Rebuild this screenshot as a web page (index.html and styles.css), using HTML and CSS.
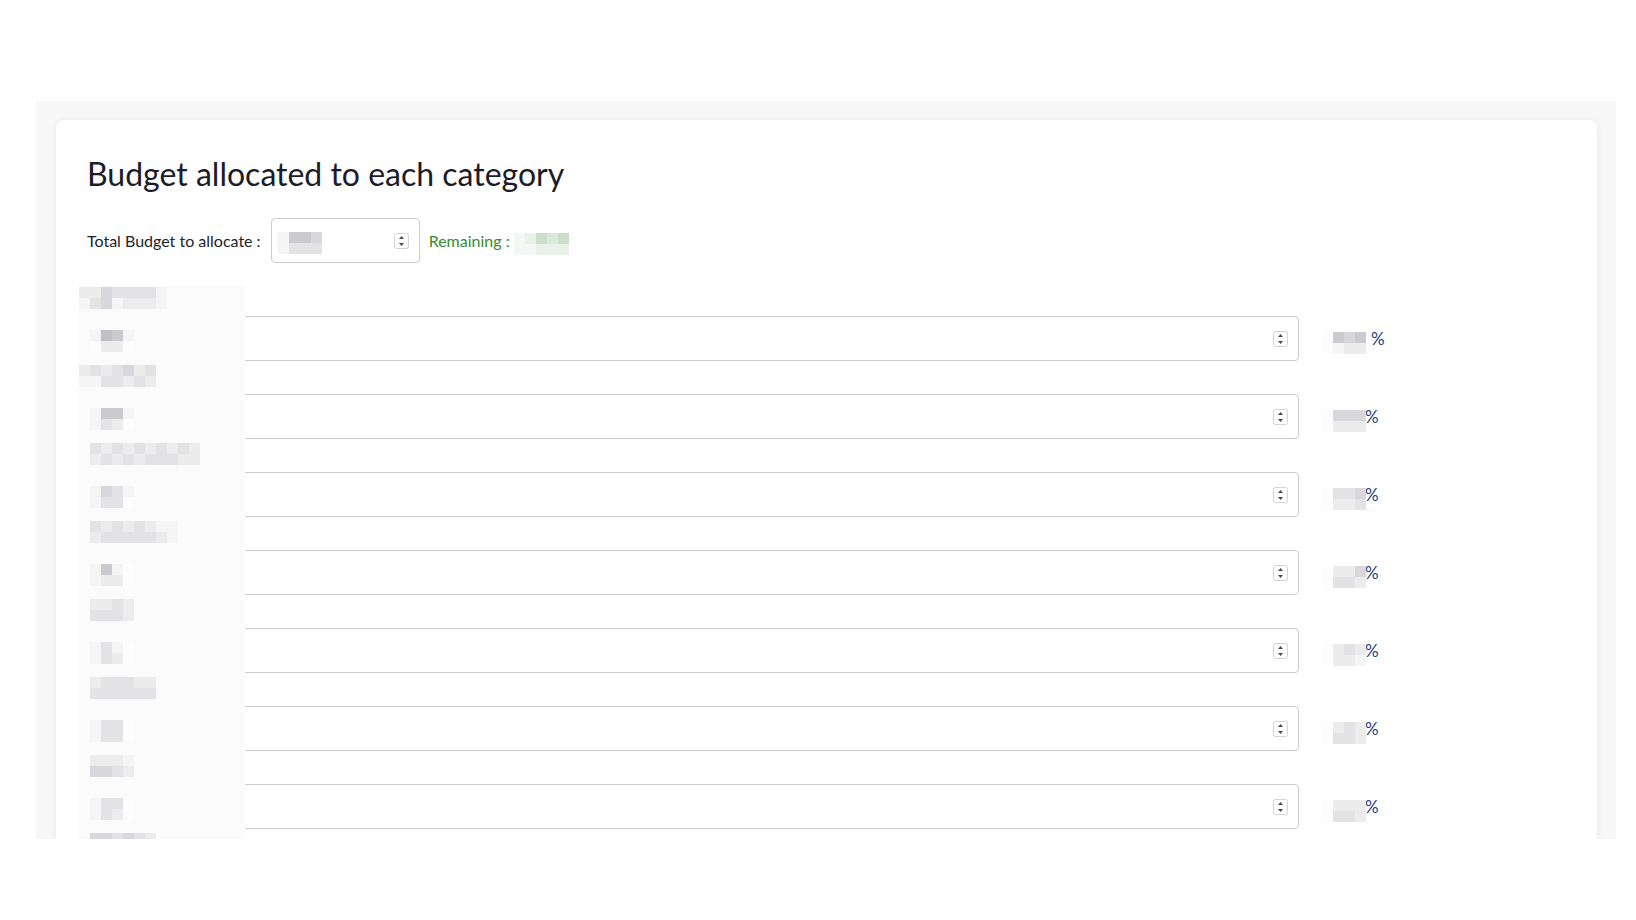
FILE: index.html
```html
<!DOCTYPE html>
<html>
	<head>
		<meta charset="UTF-8">
		<title>Budget allocated to each category</title>
		<link rel="stylesheet" href="styles.css">
	</head>
	<body>
		<div class="frame">
			<div class="card">
				<h1 class="title">Budget allocated to each category</h1>

				<div class="total">
					<span class="total-label">Total Budget to allocate :</span>
					<div class="num-box total-box">
						<span class="mosaic val"><i class="a"></i><i class="a"></i><i class="e"></i><i class="c"></i><i class="e"></i><i class="c"></i><i class="d"></i><i class="c"></i></span>
						<svg class="spin" width="15" height="16" viewBox="0 0 15 16"><rect x="0.5" y="0.5" width="14" height="15" rx="2" fill="#fff" stroke="#d4d4d4"/><path d="M5 6h5l-2.5-3z" fill="#4a4a4a"/><path d="M5 10h5l-2.5 3z" fill="#4a4a4a"/></svg>
					</div>
					<span class="remaining">Remaining :</span>
					<span class="mosaic green"><i class="ga"></i><i class="ga"></i><i class="gb"></i><i class="ga"></i><i class="gd"></i><i class="gb"></i><i class="gc"></i><i class="gb"></i><i class="gd"></i><i class="gb"></i></span>
				</div>

				<div class="fields">
					<!-- catégorie 1 -->
					<div class="field">
						<div class="field-label"><span class="mosaic"><i class="b"></i><i class="a"></i><i class="b"></i><i class="c"></i><i class="d"></i><i class="d"></i><i class="c"></i><i class="a"></i><i class="c"></i><i class="b"></i><i class="c"></i><i class="b"></i><i class="c"></i><i class="b"></i><i class="a"></i><i class="a"></i></span></div>
						<div class="field-line">
							<div class="num-box wide">
								<span class="mosaic val"><i class="a"></i><i class="w"></i><i class="f"></i><i class="b"></i><i class="e"></i><i class="b"></i><i class="a"></i><i class="w"></i></span>
								<svg class="spin" width="15" height="16" viewBox="0 0 15 16"><rect x="0.5" y="0.5" width="14" height="15" rx="2" fill="#fff" stroke="#d4d4d4"/><path d="M5 6h5l-2.5-3z" fill="#4a4a4a"/><path d="M5 10h5l-2.5 3z" fill="#4a4a4a"/></svg>
							</div>
							<div class="pct">
								<span class="mosaic"><i class="w"></i><i class="w"></i><i class="e"></i><i class="a"></i><i class="d"></i><i class="b"></i><i class="e"></i><i class="b"></i></span>
								<span class="pct-sign wide-gap">%</span>
							</div>
						</div>
					</div>
					<!-- catégorie 2 -->
					<div class="field">
						<div class="field-label"><span class="mosaic"><i class="b"></i><i class="a"></i><i class="c"></i><i class="a"></i><i class="b"></i><i class="c"></i><i class="c"></i><i class="c"></i><i class="d"></i><i class="b"></i><i class="b"></i><i class="c"></i><i class="c"></i><i class="b"></i></span></div>
						<div class="field-line">
							<div class="num-box wide">
								<span class="mosaic val"><i class="a"></i><i class="a"></i><i class="e"></i><i class="c"></i><i class="e"></i><i class="b"></i><i class="a"></i><i class="w"></i></span>
								<svg class="spin" width="15" height="16" viewBox="0 0 15 16"><rect x="0.5" y="0.5" width="14" height="15" rx="2" fill="#fff" stroke="#d4d4d4"/><path d="M5 6h5l-2.5-3z" fill="#4a4a4a"/><path d="M5 10h5l-2.5 3z" fill="#4a4a4a"/></svg>
							</div>
							<div class="pct">
								<span class="mosaic"><i class="w"></i><i class="w"></i><i class="d"></i><i class="b"></i><i class="d"></i><i class="b"></i><i class="d"></i><i class="b"></i></span>
								<span class="pct-sign">%</span>
							</div>
						</div>
					</div>
					<!-- catégorie 3 -->
					<div class="field">
						<div class="field-label"><span class="mosaic"><i class="v"></i><i class="v"></i><i class="c"></i><i class="b"></i><i class="b"></i><i class="c"></i><i class="c"></i><i class="b"></i><i class="b"></i><i class="c"></i><i class="c"></i><i class="b"></i><i class="b"></i><i class="c"></i><i class="c"></i><i class="c"></i><i class="b"></i><i class="c"></i><i class="c"></i><i class="b"></i><i class="b"></i><i class="b"></i></span></div>
						<div class="field-line">
							<div class="num-box wide">
								<span class="mosaic val"><i class="a"></i><i class="a"></i><i class="d"></i><i class="c"></i><i class="c"></i><i class="c"></i><i class="a"></i><i class="w"></i></span>
								<svg class="spin" width="15" height="16" viewBox="0 0 15 16"><rect x="0.5" y="0.5" width="14" height="15" rx="2" fill="#fff" stroke="#d4d4d4"/><path d="M5 6h5l-2.5-3z" fill="#4a4a4a"/><path d="M5 10h5l-2.5 3z" fill="#4a4a4a"/></svg>
							</div>
							<div class="pct">
								<span class="mosaic"><i class="w"></i><i class="w"></i><i class="c"></i><i class="b"></i><i class="c"></i><i class="b"></i><i class="d"></i><i class="c"></i></span>
								<span class="pct-sign">%</span>
							</div>
						</div>
					</div>
					<!-- catégorie 4 -->
					<div class="field">
						<div class="field-label"><span class="mosaic"><i class="v"></i><i class="v"></i><i class="c"></i><i class="b"></i><i class="b"></i><i class="c"></i><i class="c"></i><i class="c"></i><i class="b"></i><i class="c"></i><i class="c"></i><i class="c"></i><i class="b"></i><i class="c"></i><i class="a"></i><i class="b"></i><i class="a"></i><i class="a"></i></span></div>
						<div class="field-line">
							<div class="num-box wide">
								<span class="mosaic val"><i class="a"></i><i class="a"></i><i class="e"></i><i class="b"></i><i class="a"></i><i class="b"></i><i class="w"></i><i class="w"></i></span>
								<svg class="spin" width="15" height="16" viewBox="0 0 15 16"><rect x="0.5" y="0.5" width="14" height="15" rx="2" fill="#fff" stroke="#d4d4d4"/><path d="M5 6h5l-2.5-3z" fill="#4a4a4a"/><path d="M5 10h5l-2.5 3z" fill="#4a4a4a"/></svg>
							</div>
							<div class="pct">
								<span class="mosaic"><i class="w"></i><i class="w"></i><i class="b"></i><i class="c"></i><i class="b"></i><i class="c"></i><i class="d"></i><i class="b"></i></span>
								<span class="pct-sign">%</span>
							</div>
						</div>
					</div>
					<!-- catégorie 5 -->
					<div class="field">
						<div class="field-label"><span class="mosaic"><i class="v"></i><i class="v"></i><i class="b"></i><i class="c"></i><i class="b"></i><i class="c"></i><i class="c"></i><i class="c"></i><i class="b"></i><i class="b"></i></span></div>
						<div class="field-line">
							<div class="num-box wide">
								<span class="mosaic val"><i class="a"></i><i class="a"></i><i class="c"></i><i class="c"></i><i class="a"></i><i class="b"></i><i class="w"></i><i class="w"></i></span>
								<svg class="spin" width="15" height="16" viewBox="0 0 15 16"><rect x="0.5" y="0.5" width="14" height="15" rx="2" fill="#fff" stroke="#d4d4d4"/><path d="M5 6h5l-2.5-3z" fill="#4a4a4a"/><path d="M5 10h5l-2.5 3z" fill="#4a4a4a"/></svg>
							</div>
							<div class="pct">
								<span class="mosaic"><i class="w"></i><i class="w"></i><i class="b"></i><i class="b"></i><i class="c"></i><i class="b"></i><i class="b"></i><i class="a"></i></span>
								<span class="pct-sign">%</span>
							</div>
						</div>
					</div>
					<!-- catégorie 6 -->
					<div class="field">
						<div class="field-label"><span class="mosaic"><i class="v"></i><i class="v"></i><i class="b"></i><i class="c"></i><i class="c"></i><i class="c"></i><i class="c"></i><i class="c"></i><i class="c"></i><i class="c"></i><i class="b"></i><i class="c"></i><i class="b"></i><i class="c"></i></span></div>
						<div class="field-line">
							<div class="num-box wide">
								<span class="mosaic val"><i class="a"></i><i class="a"></i><i class="c"></i><i class="c"></i><i class="c"></i><i class="c"></i><i class="w"></i><i class="w"></i></span>
								<svg class="spin" width="15" height="16" viewBox="0 0 15 16"><rect x="0.5" y="0.5" width="14" height="15" rx="2" fill="#fff" stroke="#d4d4d4"/><path d="M5 6h5l-2.5-3z" fill="#4a4a4a"/><path d="M5 10h5l-2.5 3z" fill="#4a4a4a"/></svg>
							</div>
							<div class="pct">
								<span class="mosaic"><i class="w"></i><i class="w"></i><i class="b"></i><i class="c"></i><i class="c"></i><i class="c"></i><i class="b"></i><i class="b"></i></span>
								<span class="pct-sign">%</span>
							</div>
						</div>
					</div>
					<!-- catégorie 7 -->
					<div class="field">
						<div class="field-label"><span class="mosaic"><i class="v"></i><i class="v"></i><i class="b"></i><i class="d"></i><i class="b"></i><i class="d"></i><i class="b"></i><i class="c"></i><i class="a"></i><i class="b"></i></span></div>
						<div class="field-line">
							<div class="num-box wide">
								<span class="mosaic val"><i class="a"></i><i class="a"></i><i class="c"></i><i class="c"></i><i class="c"></i><i class="b"></i><i class="w"></i><i class="w"></i></span>
								<svg class="spin" width="15" height="16" viewBox="0 0 15 16"><rect x="0.5" y="0.5" width="14" height="15" rx="2" fill="#fff" stroke="#d4d4d4"/><path d="M5 6h5l-2.5-3z" fill="#4a4a4a"/><path d="M5 10h5l-2.5 3z" fill="#4a4a4a"/></svg>
							</div>
							<div class="pct">
								<span class="mosaic"><i class="w"></i><i class="w"></i><i class="b"></i><i class="c"></i><i class="b"></i><i class="c"></i><i class="b"></i><i class="b"></i></span>
								<span class="pct-sign">%</span>
							</div>
						</div>
					</div>
					<!-- catégorie 8 : coupée par le cadre -->
					<div class="field">
						<div class="field-label"><span class="mosaic"><i class="v"></i><i class="v"></i><i class="d"></i><i class="b"></i><i class="d"></i><i class="b"></i><i class="c"></i><i class="b"></i><i class="d"></i><i class="b"></i><i class="c"></i><i class="b"></i><i class="b"></i><i class="a"></i></span></div>
					</div>
				</div>
			</div>
		</div>
	</body>
</html>
```

FILE: styles.css
```css
*{padding: 0;margin: 0;box-sizing: border-box;}
body{
	background: #fff;
	font-family: Lato, "Noto Sans", sans-serif;
	color: #212529;
}
.frame{
	margin: 101px 20px 0 36px;
	height: 738px;
	overflow: hidden;
	background: #f7f7f7;
	padding: 19px 19px 0 20px;
}
.card{
	background: #fff;
	border-radius: 8px;
	box-shadow: 0 1px 6px rgba(0,0,0,0.07);
	padding: 34px 32px 80px 31px;
}
.title{
	font-size: 32px;
	line-height: 40px;
	font-weight: 400;
	color: #1c1c28;
}

/* total + remaining */
.total{
	display: flex;
	align-items: center;
	margin-top: 24px;
	font-size: 16px;
}
.total-label{margin-right: 10px;}
.remaining{
	margin-left: 9px;
	color: #3a8a30;
}
.remaining + .mosaic{margin-left: 4px;margin-top: 6px;}

/* champs numériques */
.num-box{
	display: flex;
	justify-content: space-between;
	align-items: flex-start;
	height: 45px;
	border: 1px solid #cdcdcd;
	border-radius: 4px;
	background: #fff;
	padding: 0 10px 0 0;
}
.total-box{width: 149px;padding-left: 6px;}
.wide{width: 1212px;padding-left: 2px;}
.spin{margin-top: 14px;flex-shrink: 0;}
.val{margin-top: 13px;}

.fields{
	position: relative;
	margin-top: 23px;
}
.fields::before{
	content: "";
	position: absolute;
	left: -8px;top: 0;bottom: 0;
	width: 166px;
	background: #fbfbfb;
	z-index: 1;
}
.field-label{height: 30px;padding-top: 1px;margin-left: -8px;}
.field-line{
	display: flex;
	align-items: center;
	height: 45px;
	margin-bottom: 3px;
}
.pct{
	display: flex;
	align-items: center;
	margin-left: 23px;
	font-size: 17px;
}
.pct .mosaic{margin-top: 8px;}
.pct-sign{color: #213f7c;margin-left: -1px;}
.pct-sign.wide-gap{margin-left: 5px;}

/* pixellisation */
.mosaic{
	display: inline-grid;
	grid-auto-flow: column;
	grid-template-rows: 11px 11px;
	grid-auto-columns: 11px;
	position: relative;
	z-index: 2;
	vertical-align: top;
}
.mosaic i{display: block;}
.mosaic .w{background: #fdfdfd;}
.mosaic .v{background: #fbfbfb;}
.mosaic .a{background: #f5f5f5;}
.mosaic .b{background: #ececed;}
.mosaic .c{background: #e3e3e5;}
.mosaic .d{background: #d8d8dc;}
.mosaic .e{background: #cbcbcf;}
.mosaic .f{background: #bfbfc5;}
.mosaic .ga{background: #f4f8f4;}
.mosaic .gb{background: #e9f1e9;}
.mosaic .gc{background: #dbe9db;}
.mosaic .gd{background: #c9dfc9;}
```
